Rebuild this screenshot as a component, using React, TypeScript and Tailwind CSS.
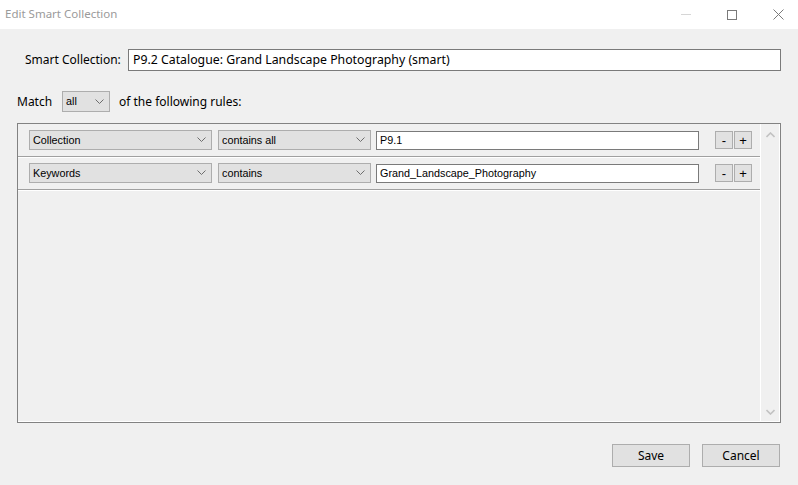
import React from 'react';

const ui = { fontFamily: '"Noto Sans", "Open Sans", sans-serif' };
const tahoma = { fontFamily: '"Liberation Sans", "DejaVu Sans", sans-serif' };

const Chevron: React.FC<{ className?: string }> = ({ className }) => (
  <svg width="9" height="6" viewBox="0 0 9 6" className={className}>
    <path d="M0.5 0.5 L4.5 4.5 L8.5 0.5" fill="none" stroke="#6d6d6d" strokeWidth="1" />
  </svg>
);

const Select: React.FC<{ value: string; width: string }> = ({ value, width }) => (
  <div className={`${width} h-[20px] bg-[#e1e1e1] border border-[#adadad] flex items-center justify-between pl-[3px] pr-[5px] text-[10.8px] text-black`} style={tahoma}>
    <span>{value}</span>
    <Chevron />
  </div>
);

const SmallBtn: React.FC<{ label: string }> = ({ label }) => (
  <div className="w-[18px] h-[18px] bg-[#e1e1e1] border border-[#adadad] flex items-center justify-center text-[13px] leading-none text-black" style={tahoma}>
    {label}
  </div>
);

const RuleRow: React.FC<{ field: string; op: string; value: string }> = ({ field, op, value }) => (
  <div className="flex items-center pl-[11px] pr-[8px] pt-[6px] pb-[6px] border-b border-[#a0a0a0] shadow-[0_1px_0_#ffffff]">
    <Select value={field} width="w-[183px]" />
    <div className="ml-[6px]">
      <Select value={op} width="w-[153px]" />
    </div>
    <div className="ml-[5px] w-[323px] h-[19px] bg-white border border-[#7a7a7a] flex items-center pl-[3px] text-[10.8px] text-black" style={tahoma}>
      {value}
    </div>
    <div className="ml-[16px] flex gap-[1px]">
      <SmallBtn label="-" />
      <SmallBtn label="+" />
    </div>
  </div>
);

const DialogButton: React.FC<{ label: string }> = ({ label }) => (
  <div className="w-[78px] h-[23px] bg-[#e1e1e1] border border-[#adadad] flex items-center justify-center text-[12px] text-black">
    {label}
  </div>
);

const App: React.FC = () => {
  return (
    <div className="w-[798px] h-[485px] bg-[#f0f0f0] flex flex-col overflow-hidden" style={ui}>
      {/* title bar */}
      <div className="h-[29px] bg-white flex items-center justify-between overflow-hidden">
        <span className="pl-[5px] pb-[2px] text-[11.5px] text-[#9a9a9a]">Edit Smart Collection</span>
        <div className="flex h-full -mr-[3px]">
          <div className="w-[46px] flex items-center justify-center">
            <div className="w-[10px] h-[1px] bg-[#d6d6d6]" />
          </div>
          <div className="w-[46px] flex items-center justify-center">
            <div className="w-[10px] h-[10px] border border-[#7a7a7a]" />
          </div>
          <div className="w-[46px] flex items-center justify-center">
            <svg width="11" height="11" viewBox="0 0 11 11">
              <path d="M0.5 0.5 L10.5 10.5 M10.5 0.5 L0.5 10.5" stroke="#7a7a7a" strokeWidth="1" />
            </svg>
          </div>
        </div>
      </div>

      <div className="flex-1 flex flex-col px-[17px]">
        {/* name */}
        <div className="mt-[20px] flex items-center">
          <span className="pl-[8px] w-[111px] text-[12px] text-black">Smart Collection:</span>
          <div className="flex-1 h-[22px] bg-white border border-[#7a7a7a] flex items-center pl-[4px] text-[12.3px] text-black">
            P9.2 Catalogue: Grand Landscape Photography (smart)
          </div>
        </div>

        {/* match */}
        <div className="mt-[20px] flex items-center h-[21px]">
          <span className="w-[45px] text-[12px] text-black">Match</span>
          <div className="w-[48px] h-[21px] bg-[#e1e1e1] border border-[#adadad] flex items-center justify-between pl-[3px] pr-[5px] text-[10.8px] text-black" style={tahoma}>
            <span>all</span>
            <Chevron />
          </div>
          <span className="ml-[9px] text-[12px] text-black">of the following rules:</span>
        </div>

        {/* rules */}
        <div className="mt-[11px] h-[300px] border border-[#828282] shadow-[inset_0_-1px_0_#ffffff,inset_-1px_0_0_#ffffff] flex">
          <div className="flex-1 flex flex-col">
            <RuleRow field="Collection" op="contains all" value="P9.1" />
            <RuleRow field="Keywords" op="contains" value="Grand_Landscape_Photography" />
          </div>
          <div className="w-[19px] border-l border-white flex flex-col items-center justify-between pt-[8px] pb-[6px] mb-[1px] mr-[1px]">
            <svg width="9" height="6" viewBox="0 0 9 6">
              <path d="M0.5 5 L4.5 1 L8.5 5" fill="none" stroke="#c2c2c2" strokeWidth="1.6" />
            </svg>
            <svg width="9" height="6" viewBox="0 0 9 6">
              <path d="M0.5 1 L4.5 5 L8.5 1" fill="none" stroke="#c2c2c2" strokeWidth="1.6" />
            </svg>
          </div>
        </div>

        {/* buttons */}
        <div className="mt-[21px] flex justify-end gap-[12px] pr-[1px]">
          <DialogButton label="Save" />
          <DialogButton label="Cancel" />
        </div>
      </div>
    </div>
  );
};

export default App;
